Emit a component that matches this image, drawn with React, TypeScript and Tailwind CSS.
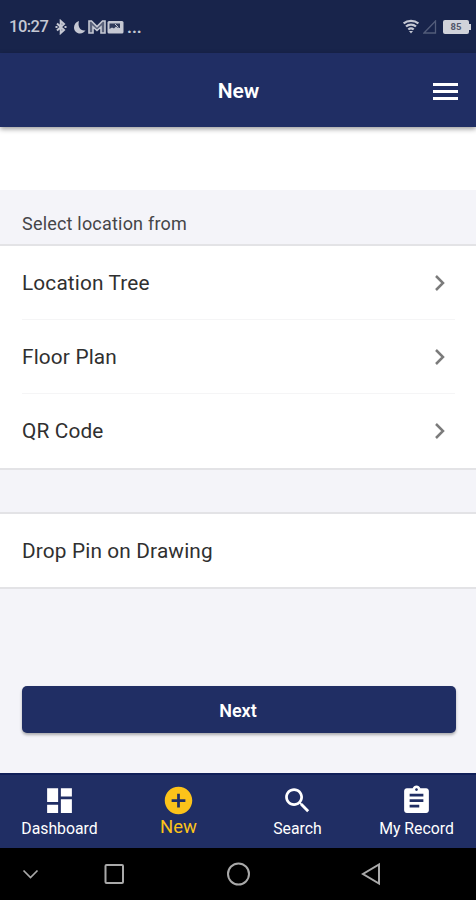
import type { ReactNode } from "react";

const locations = ["Location Tree", "Floor Plan", "QR Code"];

const tabs = [
  { label: "Dashboard", path: "M3 13h8V3H3v10zm0 8h8v-6H3v6zm10 0h8V11h-8v10zm0-18v6h8V3h-8z" },
  {
    label: "New",
    active: true,
    path: "M12 2C6.48 2 2 6.48 2 12s4.48 10 10 10 10-4.48 10-10S17.52 2 12 2zm5 11h-4v4h-2v-4H7v-2h4V7h2v4h4v2z",
  },
  {
    label: "Search",
    path: "M15.5 14h-.79l-.28-.27C15.41 12.59 16 11.11 16 9.5 16 5.91 13.09 3 9.5 3S3 5.91 3 9.5 5.91 16 9.5 16c1.61 0 3.09-.59 4.23-1.57l.27.28v.79l5 4.99L20.49 19l-4.99-5zm-6 0C7.01 14 5 11.99 5 9.5S7.01 5 9.5 5 14 7.01 14 9.5 11.99 14 9.5 14z",
  },
  {
    label: "My Record",
    path: "M19 3h-4.18C14.4 1.84 13.3 1 12 1c-1.3 0-2.4.84-2.82 2H5c-1.1 0-2 .9-2 2v14c0 1.1.9 2 2 2h14c1.1 0 2-.9 2-2V5c0-1.1-.9-2-2-2zm-7 0c.55 0 1 .45 1 1s-.45 1-1 1-1-.45-1-1 .45-1 1-1zm2 14H7v-2h7v2zm3-4H7v-2h10v2zm0-4H7V7h10v2z",
  },
];

function StatusBar() {
  return (
    <div className="flex h-[53px] items-center bg-[#18244b] pl-[9px] pr-[5px] text-[#c5c8d3]">
      <span className="w-[40px] pt-[2px] text-[16.5px] font-medium tracking-[-0.5px]">10:27</span>
      <svg className="ml-[6px] h-[16px] w-[12px]" viewBox="0 0 12 16" fill="none" stroke="currentColor" strokeWidth="2">
        <path d="M2 4.500l7 6.500-3.300 3V2L9 5l-7 6.500" />
        <path d="M.5 8h2M9.500 8h2" />
      </svg>
      <svg className="ml-[6px] h-[16px] w-[14px]" viewBox="0 0 14 16" fill="currentColor">
        <path d="M6 2C2.800 3 1 5.700 1 8.500 1 12 3.800 14.500 7 14.500c2.500 0 4.500-1.200 5.500-3.200C8 12.500 4.200 8 6 2z" />
      </svg>
      <svg className="h-[16px] w-[20px]" viewBox="0 0 20 16">
        <path
          d="M2 2h2.500L10 7.500 15.500 2H18v12h-4V8l-4 3.500L6 8v6H2z"
          fill="#59617a"
          stroke="currentColor"
          strokeWidth="1.600"
        />
      </svg>
      <svg className="h-[16px] w-[17px]" viewBox="0 0 17 16">
        <rect x=".5" y="2" width="16" height="12.500" rx="1.500" fill="currentColor" />
        <path d="M2.500 4.500h10.500v4.500h-2l-2-1.500-2 2-2-1-2.500 1.500z" fill="#303b5c" />
        <path d="M8 5l3.500 3.500M4 11h9" stroke="#c5c8d3" fill="none" />
      </svg>
      <span className="ml-[3px] text-[17px] font-bold leading-4">...</span>

      <svg className="ml-auto h-[15px] w-[16px]" viewBox="0 0 16 15" fill="none" stroke="currentColor" strokeWidth="2.300">
        <path d="M.6 4.500c4-3.600 10.800-3.600 14.800 0M3 7.500c2.700-2.400 7.300-2.400 10 0M5.300 10.500c1.500-1.300 3.900-1.300 5.400 0" />
        <path d="M6 12h4l-2 2.500z" fill="currentColor" stroke="none" />
      </svg>
      <svg className="ml-[4px] h-[14px] w-[14px]" viewBox="0 0 14 14" fill="none" stroke="#525c7a" strokeWidth="1.300">
        <path d="M12.500 1v12H1z" />
      </svg>
      <div className="ml-[6px] flex items-center">
        <span className="flex h-[14px] w-[26px] items-center justify-center rounded-[2px] bg-[#d0d2da] pt-px text-[9.5px] font-bold text-[#53576a]">
          85
        </span>
        <span className="h-[6px] w-[2px] bg-[#d0d2da]" />
      </div>
    </div>
  );
}

function Row({ children, chevron, divider }: { children: ReactNode; chevron?: boolean; divider?: boolean }) {
  return (
    <div className={`ml-[22px] mr-[21px] flex h-[74px] items-center ${divider ? "border-b border-[#f5f5f6]" : ""}`}>
      <span className="grow pt-[2px] text-[20.8px] tracking-[0.15px] text-[#303030]">{children}</span>
      {chevron && (
        <svg className="mr-[9px] h-[18px] w-[12px]" viewBox="0 0 12 18" fill="none" stroke="#7b7b7b" strokeWidth="2.500">
          <path d="M2 2l7 7-7 7" />
        </svg>
      )}
    </div>
  );
}

export default function App() {
  return (
    <main className="flex h-[900px] w-full flex-col bg-[#f4f4f9] font-[Roboto,sans-serif]">
      <StatusBar />

      <header className="relative flex h-[74px] items-center bg-[#202e64] pl-[44px] pr-[18px] text-white shadow-[0_2px_5px_rgba(0,0,0,0.4)]">
        <h1 className="grow pt-[3px] text-center text-[21px] font-semibold">New</h1>
        <svg className="mt-[3px] h-[18px] w-[25px]" viewBox="0 0 25 18" fill="currentColor">
          <path d="M0 0h25v3H0zM0 7h25v3H0zM0 14h25v3H0z" />
        </svg>
      </header>

      <div className="h-[63px] bg-white" />
      <h2 className="h-[54px] pl-[22px] pt-[20px] text-[18px] leading-[27px] tracking-[0.2px] text-[#454548]">
        Select location from
      </h2>

      <section className="h-[226px] border-y-2 border-[#e3e3e6] bg-white">
        {locations.map((name, i) => (
          <Row key={name} chevron divider={i < locations.length - 1}>
            {name}
          </Row>
        ))}
      </section>

      <section className="mt-[42px] h-[77px] border-y-2 border-[#e3e3e6] bg-white">
        <Row>Drop Pin on Drawing</Row>
      </section>

      <button className="ml-[22px] mr-[20px] mt-[97px] h-[47px] shrink-0 rounded-[5px] bg-[#202e64] pr-[2px] pt-px text-[18px] font-semibold text-white shadow-[0_2px_3px_rgba(0,0,0,0.3)]">
        Next
      </button>

      <nav className="mt-auto grid h-[75px] grid-cols-4 border-t-2 border-[#101f59] bg-[#202e64] text-white">
        {tabs.map((tab) => (
          <div key={tab.label} className={`flex flex-col items-center pt-[8.5px] ${tab.active ? "text-[#fcc31a]" : ""}`}>
            <svg className="h-[33px] w-[33px]" viewBox="0 0 24 24" fill="currentColor">
              <path d={tab.path} />
            </svg>
            <span className={tab.active ? "text-[18.5px] leading-[21px]" : "text-[15.8px] leading-[24px]"}>{tab.label}</span>
          </div>
        ))}
      </nav>

      <div className="flex h-[52px] items-center bg-black text-[#a9a9a9]">
        <svg className="ml-[22px] h-[12px] w-[17px]" viewBox="0 0 17 12" fill="none" stroke="currentColor" strokeWidth="1.700">
          <path d="M1.500 2.500l7 7 7-7" />
        </svg>
        <svg className="ml-[65px] h-[22px] w-[20px]" viewBox="0 0 20 22" fill="none" stroke="currentColor" strokeWidth="2">
          <rect x="1.500" y="2" width="17.500" height="18" rx="1" />
        </svg>
        <svg className="ml-[102px] h-[24px] w-[24px]" viewBox="0 0 24 24" fill="none" stroke="currentColor" strokeWidth="2">
          <circle cx="12.500" cy="12" r="10.500" />
        </svg>
        <svg className="ml-[111px] h-[24px] w-[20px]" viewBox="0 0 20 24" fill="none" stroke="currentColor" strokeWidth="2">
          <path d="M18 2.500v19L2 12z" />
        </svg>
      </div>
    </main>
  );
}
